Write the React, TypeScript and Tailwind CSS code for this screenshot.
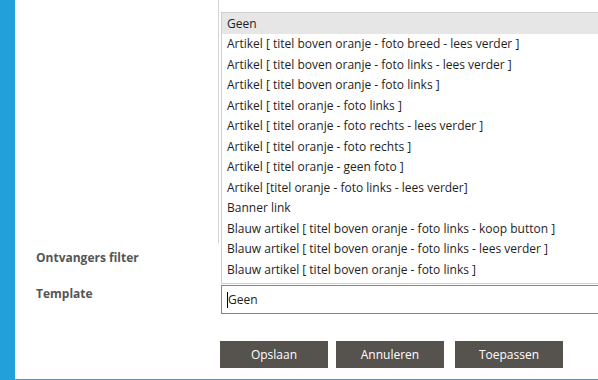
const options = [
  "Artikel [ titel boven oranje - foto breed - lees verder ]",
  "Artikel [ titel boven oranje - foto links - lees verder ]",
  "Artikel [ titel boven oranje - foto links ]",
  "Artikel [ titel oranje - foto links ]",
  "Artikel [ titel oranje - foto rechts - lees verder ]",
  "Artikel [ titel oranje - foto rechts ]",
  "Artikel [ titel oranje - geen foto ]",
  "Artikel [titel oranje - foto links - lees verder]",
  "Banner link",
  "Blauw artikel [ titel boven oranje - foto links - koop button ]",
  "Blauw artikel [ titel boven oranje - foto links - lees verder ]",
  "Blauw artikel [ titel boven oranje - foto links ]",
];

export default function App() {
  return (
    <div
      className="flex h-[380px] w-[598px] overflow-hidden bg-white text-[12px]"
      style={{ fontFamily: '"Open Sans", "Noto Sans", sans-serif' }}
    >
      <div className="w-[15px] shrink-0 bg-[#22a0da]" />

      <div className="relative h-[380px] flex-1 border-b border-[#3a9bd0]">
        {/* field behind the open list */}
        <div className="ml-[203px] h-[243px] border-l border-[#d4d4d4]" />

        <div className="flex h-[30px] items-center">
          <div className="w-[206px] pl-[21px] font-bold text-[#555555]">Ontvangers filter</div>
        </div>

        <div className="mt-[12px] flex items-start">
          <div className="w-[206px] pl-[21px] pt-[1px] font-bold leading-[16px] text-[#555555]">Template</div>
          <div className="flex h-[29px] flex-1 items-center border border-r-0 border-[#3a9bd0] pl-[5px] text-[#222]">
            <span className="h-[16px] w-px bg-black" />
            Geen
          </div>
        </div>

        <div className="mt-[27px] flex pl-[205px] text-white">
          <button className="h-[27px] w-[108px] bg-[#56534e]">Opslaan</button>
          <button className="ml-[8px] h-[27px] w-[108px] bg-[#56534e]">Annuleren</button>
          <button className="ml-[11px] h-[27px] w-[108px] bg-[#56534e]">Toepassen</button>
        </div>

        {/* open dropdown list */}
        <div className="absolute left-[206px] right-0 top-[12px] h-[272px] border border-r-0 border-[#cfcfcf] bg-white text-[#1e1e1e]">
          <div className="flex h-[21px] items-center bg-[#e6e6e6] pl-[5px]">Geen</div>
          {options.map((o) => (
            <div key={o} className="flex h-[20.5px] items-center whitespace-nowrap pl-[5px]">
              {o}
            </div>
          ))}
        </div>
      </div>
    </div>
  );
}
